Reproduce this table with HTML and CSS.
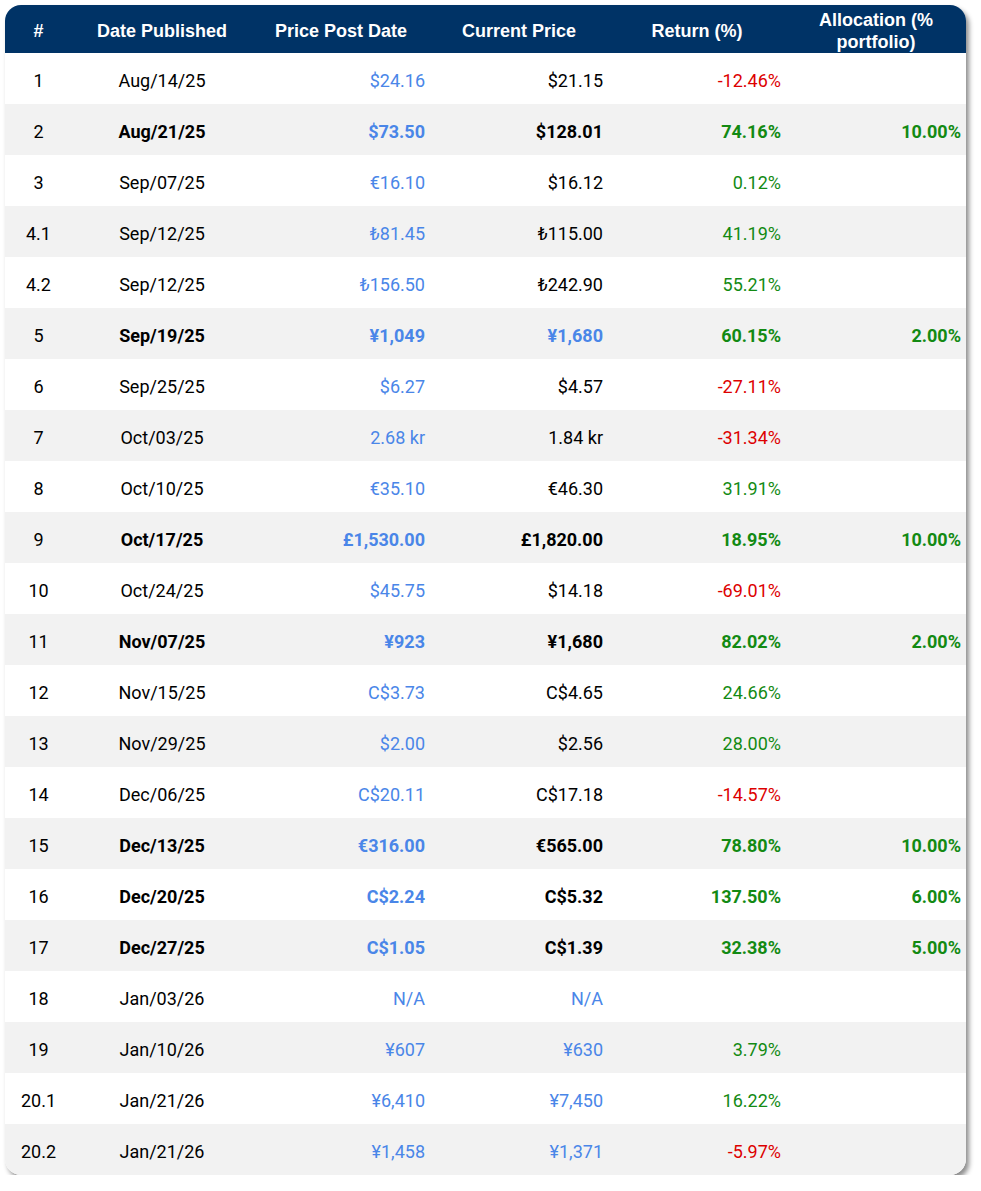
FILE: index.html
```html
<!DOCTYPE html>
<html>
<head>
<meta charset="utf-8">
<link rel="stylesheet" href="styles.css">
</head>
<body>
<div class="card">
<table class="grid">
<colgroup>
<col class="c-num"><col class="c-date"><col class="c-px"><col class="c-px"><col class="c-px"><col class="c-alloc">
</colgroup>
<thead>
<tr><th>#</th><th>Date Published</th><th>Price Post Date</th><th>Current Price</th><th>Return (%)</th><th>Allocation (%<br>portfolio)</th></tr>
</thead>
<tbody>
<tr><td class="ctr">1</td><td class="ctr">Aug/14/25</td><td class="blue">$24.16</td><td>$21.15</td><td class="red">-12.46%</td><td></td></tr>
<tr class="b"><td class="ctr">2</td><td class="ctr">Aug/21/25</td><td class="blue">$73.50</td><td>$128.01</td><td class="green">74.16%</td><td class="green">10.00%</td></tr>
<tr><td class="ctr">3</td><td class="ctr">Sep/07/25</td><td class="blue">€16.10</td><td>$16.12</td><td class="green">0.12%</td><td></td></tr>
<tr><td class="ctr">4.1</td><td class="ctr">Sep/12/25</td><td class="blue">₺81.45</td><td>₺115.00</td><td class="green">41.19%</td><td></td></tr>
<tr><td class="ctr">4.2</td><td class="ctr">Sep/12/25</td><td class="blue">₺156.50</td><td>₺242.90</td><td class="green">55.21%</td><td></td></tr>
<tr class="b"><td class="ctr">5</td><td class="ctr">Sep/19/25</td><td class="blue">¥1,049</td><td class="blue">¥1,680</td><td class="green">60.15%</td><td class="green">2.00%</td></tr>
<tr><td class="ctr">6</td><td class="ctr">Sep/25/25</td><td class="blue">$6.27</td><td>$4.57</td><td class="red">-27.11%</td><td></td></tr>
<tr><td class="ctr">7</td><td class="ctr">Oct/03/25</td><td class="blue">2.68 kr</td><td>1.84 kr</td><td class="red">-31.34%</td><td></td></tr>
<tr><td class="ctr">8</td><td class="ctr">Oct/10/25</td><td class="blue">€35.10</td><td>€46.30</td><td class="green">31.91%</td><td></td></tr>
<tr class="b"><td class="ctr">9</td><td class="ctr">Oct/17/25</td><td class="blue">£1,530.00</td><td>£1,820.00</td><td class="green">18.95%</td><td class="green">10.00%</td></tr>
<tr><td class="ctr">10</td><td class="ctr">Oct/24/25</td><td class="blue">$45.75</td><td>$14.18</td><td class="red">-69.01%</td><td></td></tr>
<tr class="b"><td class="ctr">11</td><td class="ctr">Nov/07/25</td><td class="blue">¥923</td><td>¥1,680</td><td class="green">82.02%</td><td class="green">2.00%</td></tr>
<tr><td class="ctr">12</td><td class="ctr">Nov/15/25</td><td class="blue">C$3.73</td><td>C$4.65</td><td class="green">24.66%</td><td></td></tr>
<tr><td class="ctr">13</td><td class="ctr">Nov/29/25</td><td class="blue">$2.00</td><td>$2.56</td><td class="green">28.00%</td><td></td></tr>
<tr><td class="ctr">14</td><td class="ctr">Dec/06/25</td><td class="blue">C$20.11</td><td>C$17.18</td><td class="red">-14.57%</td><td></td></tr>
<tr class="b"><td class="ctr">15</td><td class="ctr">Dec/13/25</td><td class="blue">€316.00</td><td>€565.00</td><td class="green">78.80%</td><td class="green">10.00%</td></tr>
<tr class="b"><td class="ctr">16</td><td class="ctr">Dec/20/25</td><td class="blue">C$2.24</td><td>C$5.32</td><td class="green">137.50%</td><td class="green">6.00%</td></tr>
<tr class="b"><td class="ctr">17</td><td class="ctr">Dec/27/25</td><td class="blue">C$1.05</td><td>C$1.39</td><td class="green">32.38%</td><td class="green">5.00%</td></tr>
<tr><td class="ctr">18</td><td class="ctr">Jan/03/26</td><td class="blue">N/A</td><td class="blue">N/A</td><td></td><td></td></tr>
<tr><td class="ctr">19</td><td class="ctr">Jan/10/26</td><td class="blue">¥607</td><td class="blue">¥630</td><td class="green">3.79%</td><td></td></tr>
<tr><td class="ctr">20.1</td><td class="ctr">Jan/21/26</td><td class="blue">¥6,410</td><td class="blue">¥7,450</td><td class="green">16.22%</td><td></td></tr>
<tr><td class="ctr">20.2</td><td class="ctr">Jan/21/26</td><td class="blue">¥1,458</td><td class="blue">¥1,371</td><td class="red">-5.97%</td><td></td></tr>
</tbody>
</table>
</div>
</body>
</html>
```

FILE: styles.css
```css
html, body {
  margin: 0;
  padding: 0;
  background: #ffffff;
}
body {
  padding: 5px 0 0 5px;
}
.card {
  width: 961px;
  border-radius: 16px;
  overflow: hidden;
  background: #ffffff;
  box-shadow: 3px 4px 5px rgba(0, 0, 0, 0.45);
}
.grid {
  width: 961px;
  border-collapse: collapse;
  table-layout: fixed;
  font-family: Roboto, "Liberation Sans", sans-serif;
  font-size: 18px;
  color: #000000;
}
.c-num { width: 67px; }
.c-date { width: 180px; }
.c-px { width: 178px; }
.c-alloc { width: 180px; }
.grid thead tr {
  background: #003366;
  height: 48px;
}
.grid th {
  font-family: "Liberation Sans", Arial, sans-serif;
  font-weight: bold;
  font-size: 18px;
  line-height: 22px;
  color: #ffffff;
  text-align: center;
  padding: 3px 4px 0;
  vertical-align: middle;
}
.grid tbody tr {
  height: 51px;
}
.grid tbody tr:nth-child(even) {
  background: #f2f2f2;
}
.grid td {
  text-align: right;
  padding: 3px 5px 0 4px;
  vertical-align: middle;
  white-space: nowrap;
}
.grid td.ctr {
  text-align: center;
  padding: 3px 0 0;
}
.grid tr.b td:not(:first-child) {
  font-weight: bold;
}
.blue { color: #4a86e8; }
.red { color: #dd0000; }
.green { color: #138a13; }
```
